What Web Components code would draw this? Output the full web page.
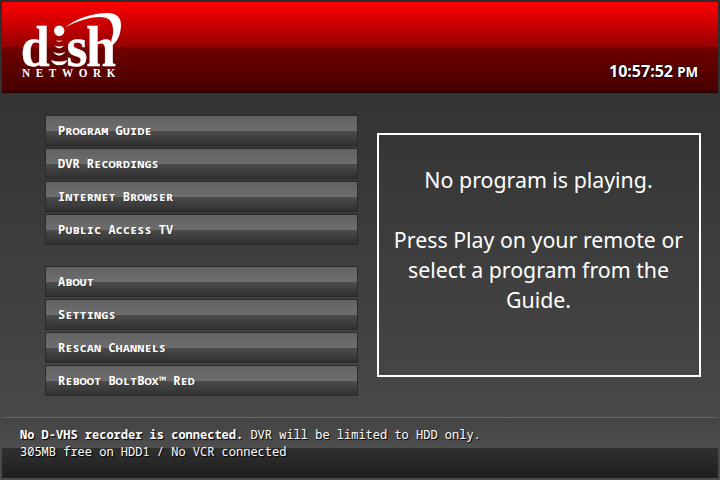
<!DOCTYPE html>
<html lang="en">
<head>
<meta charset="utf-8">
<title>Dish Network</title>
<style>
html,body{margin:0;width:720px;height:480px;overflow:hidden}
body{font-family:"Noto Sans","Open Sans",sans-serif;color:#fff}
</style>
</head>
<body>
<tv-screen>
  <top-bar slot="header"><dish-logo></dish-logo><clock-face meridiem="PM">10:57:52</clock-face></top-bar>
  <menu-list slot="menu">
    <menu-group><menu-item>Program Guide</menu-item><menu-item>DVR Recordings</menu-item><menu-item>Internet Browser</menu-item><menu-item>Public Access TV</menu-item></menu-group>
    <menu-group><menu-item>About</menu-item><menu-item>Settings</menu-item><menu-item>Rescan Channels</menu-item><menu-item>Reboot BoltBox™ Red</menu-item></menu-group>
  </menu-list>
  <preview-pane slot="preview"><span>No program is playing.</span><span>Press Play on your remote or select a program from the Guide.</span></preview-pane>
  <status-bar slot="footer"><div><b>No D-VHS recorder is connected.</b> DVR will be limited to HDD only.</div><div>305MB free on HDD1 / No VCR connected</div></status-bar>
</tv-screen>
<script>
function define(name, html) {
  const template = document.createElement('template');
  template.innerHTML = html;
  customElements.define(name, class extends HTMLElement {
    constructor() {
      super();
      this.attachShadow({mode: 'open'}).append(template.content.cloneNode(true));
    }
    connectedCallback() {
      const m = this.shadowRoot.querySelector('[data-meridiem]');
      if (m) m.textContent = this.getAttribute('meridiem');
    }
  });
}

define('tv-screen', `<style>
:host{display:flex;flex-direction:column;box-sizing:border-box;width:720px;height:480px;padding:2px;background:linear-gradient(#2d2d2d,#4c4c4c)}
main{flex:1;display:flex;align-items:flex-start;padding:22px 17px 0 43px;gap:19px}
slot[name=preview]::slotted(*){margin-top:18px}
</style>
<slot name="header"></slot><main><slot name="menu"></slot><slot name="preview"></slot></main><slot name="footer"></slot>`);

define('top-bar', `<style>
:host{display:flex;justify-content:space-between;align-items:flex-end;box-sizing:border-box;height:91px;padding:0 20px 9px 18px;border-bottom:1px solid #260000;background:linear-gradient(#ff0000,#930000 50%,#700000 50%,#450000)}
</style><slot></slot>`);

define('clock-face', `<style>
:host{display:block;font-size:16px;line-height:22px;font-weight:700;text-shadow:1px 1px 1px #000,-1px -1px 1px #0008}
small{font-size:13.33px}
</style><slot></slot> <small data-meridiem></small>`);

define('dish-logo', `<style>
:host{display:block;width:104px;height:72px;margin-bottom:1px}
svg{display:block}
text{font-family:"Liberation Serif","Times New Roman",serif;font-weight:700;fill:#fff}
</style>
<svg width="104" height="72" viewBox="20 10 104 72" fill="#fff">
<text x="20.7" y="66.3" font-size="58" textLength="29" lengthAdjust="spacingAndGlyphs" stroke="#fff" stroke-width=".3">d</text>
<text x="66.5" y="66.3" font-size="57" textLength="21" lengthAdjust="spacingAndGlyphs" stroke="#fff" stroke-width=".5">s</text>
<text x="86" y="66.3" font-size="58" textLength="30" lengthAdjust="spacingAndGlyphs" stroke="#fff" stroke-width=".3">h</text>
<text transform="translate(22 77) scale(.93 1)" font-size="12" textLength="100.5" lengthAdjust="spacing">NETWORK</text>
<circle cx="59.2" cy="30.8" r="5.2"/>
<path d="M55.7 40.2Q59.2 41.5 62.7 40.2Q59.2 43.5 55.7 40.2Z"/>
<path d="M54.3 45.4Q59.2 47.6 64.1 45.4Q59.2 51.1 54.3 45.4Z"/>
<path d="M53 51.8Q59.2 55.2 65.4 51.8Q59.2 59.5 53 51.8Z"/>
<path d="M51 60Q59.2 63.2 67.5 60Q65.5 65.3 59.2 65.3Q53 65.3 51 60Z"/>
<path d="M65 27.5C77 18 94 12.7 108 13C117 13.3 121.2 18 121 25C120.8 34 118 41 112 45.5L111.3 40C114 34 113.8 25 110 20.5C103 13.3 82 18.5 65 27.5Z"/>
</svg>`);

define('menu-list', `<style>:host{display:flex;flex-direction:column;gap:21px;width:313px}</style><slot></slot>`);
define('menu-group', `<style>:host{display:flex;flex-direction:column;gap:2px}</style><slot></slot>`);
define('menu-item', `<style>
:host{display:block;box-sizing:border-box;height:31px;padding:0 12px;border:1px solid #2b2b2b;font:700 12px/29px "Noto Sans Mono","Noto Sans",monospace;font-variant-caps:small-caps;text-shadow:1px 1px 1px #3339;background:linear-gradient(#626262,#6e6e6e 15px,#4c4c4c 15px,#303030) padding-box}
</style><slot></slot>`);
define('preview-pane', `<style>
:host{display:flex;flex-direction:column;gap:30px;box-sizing:border-box;width:324px;height:244px;border:2px solid #fff;padding:30px 14px 30px 13px;font-size:21.33px;line-height:30px;text-align:center}
</style><slot></slot>`);
define('status-bar', `<style>
:host{display:block;box-sizing:border-box;height:61px;padding:8px 18px 0;border-top:1px solid #646464;font:12px/17px "Noto Sans Mono",monospace;text-shadow:1px 1px 1px #000;background:linear-gradient(#434343,#4e4e4e 30px,#303030 30px,#1f1f1f) padding-box}
</style><slot></slot>`);
</script>
</body>
</html>
